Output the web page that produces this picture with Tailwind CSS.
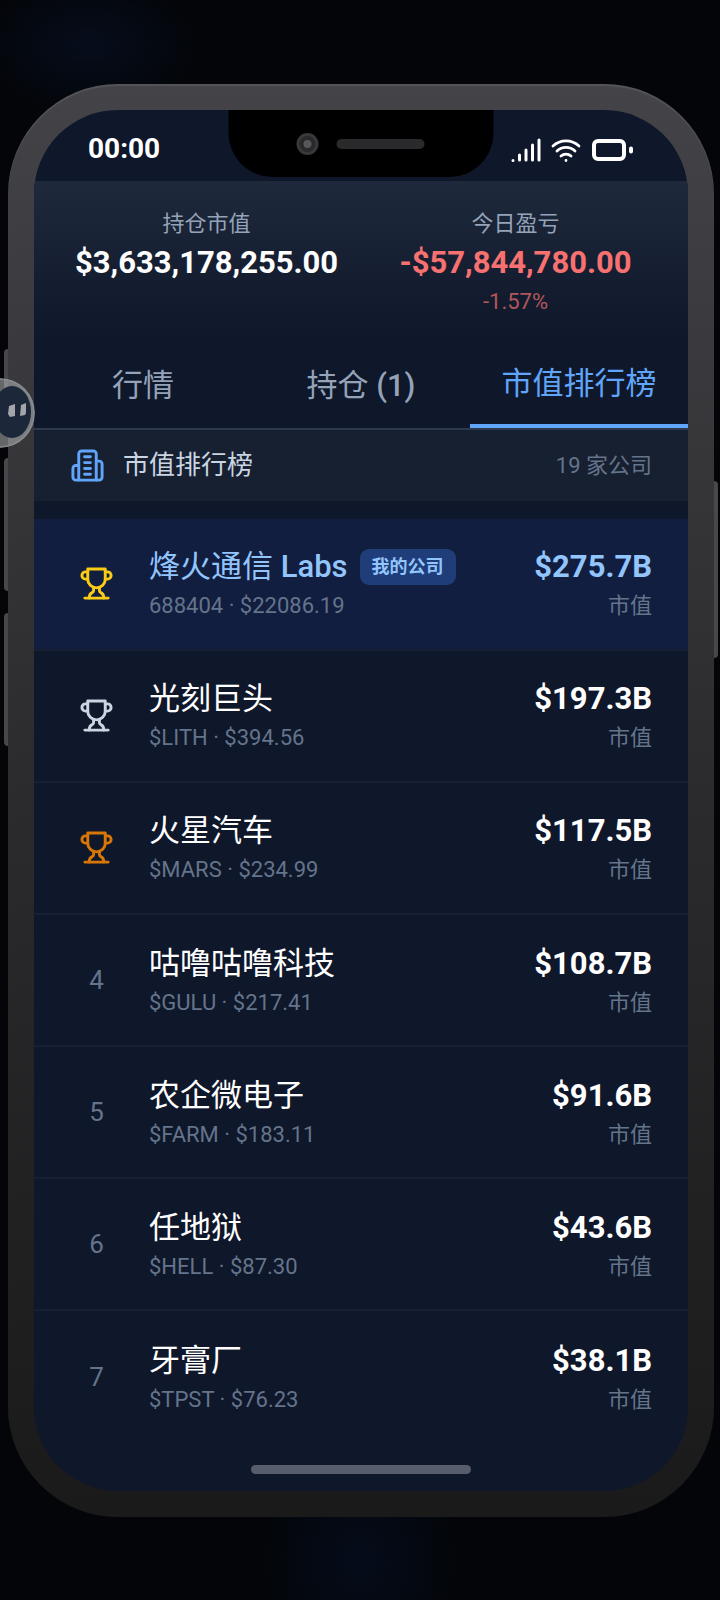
<!DOCTYPE html>
<html lang="zh-CN">
<head>
<meta charset="utf-8">
<meta name="viewport" content="width=device-width, initial-scale=1">
<title>市值排行榜</title>
<script src="https://cdn.jsdelivr.net/npm/@tailwindcss/browser@4"></script>
</head>
<body class="relative min-h-screen overflow-x-hidden bg-[#030509] bg-[radial-gradient(ellipse_110px_70px_at_90px_45px,#060d1b_0%,transparent_100%),radial-gradient(ellipse_100px_120px_at_50%_1560px,#050c1a_0%,transparent_100%)] bg-no-repeat pt-[84px] pr-[6px] pb-[83px] pl-2 font-[Roboto,'Noto_Sans_CJK_SC',sans-serif]">

<svg class="hidden">
  <symbol id="trophy" viewBox="0 0 24 24" fill="none" stroke="currentColor" stroke-width="2" stroke-linecap="round" stroke-linejoin="round">
    <path d="M6 9H4.500a2.500 2.500 0 0 1 0-5H6"/><path d="M18 9h1.500a2.500 2.500 0 0 0 0-5H18"/><path d="M4 22h16"/>
    <path d="M10 14.660V17c0 .55-.47.98-.97 1.210C7.850 18.750 7 20.240 7 22"/>
    <path d="M14 14.660V17c0 .55.47.98.97 1.210C16.150 18.750 17 20.240 17 22"/>
    <path d="M18 2H6v7a6 6 0 0 0 12 0V2Z"/>
  </symbol>
</svg>

<div class="relative">
  <!-- side buttons -->
  <i class="absolute top-[265px] -left-1 h-[66px] w-2 rounded-l bg-[#48484c]"></i>
  <i class="absolute top-[374px] -left-1 h-[133px] w-2 rounded-l bg-[#48484c]"></i>
  <i class="absolute top-[529px] -left-1 h-[133px] w-2 rounded-l bg-[#48484c]"></i>
  <i class="absolute top-[397px] -right-1 h-[177px] w-[6px] rounded-r bg-[#48484c]"></i>

  <div class="relative rounded-[110px] bg-linear-to-b from-[#434348] via-[#2b2b2d] via-50% to-[#1a1a1b] p-[26px] shadow-[inset_0_2px_1px_#ffffff18]">
    <main class="relative overflow-hidden rounded-[84px] bg-[#0f172a] pb-12 text-white">
      <!-- notch -->
      <div class="absolute top-0 left-1/2 flex h-[67px] w-[265px] -translate-x-1/2 items-center justify-center gap-[18px] rounded-b-[44px] bg-black pr-[2px]">
        <i class="flex size-[22px] items-center justify-center rounded-full border-[3px] border-[#39393b] bg-[#29292b]"><b class="size-2 rounded-full bg-[#58585c]"></b></i>
        <i class="h-[10px] w-[88px] rounded-full bg-[#2a2a2c]"></i>
      </div>

      <header class="flex h-[71px] items-center justify-between pt-[7px] pr-[55px] pl-[54px]">
        <time class="text-[28px] leading-9 font-bold">00:00</time>
        <div class="flex items-center gap-[9px] pt-px">
          <svg class="h-6 w-[31px]" viewBox="0 0 31 24" stroke="#fff" stroke-width="3" stroke-linecap="round"><path d="M2 22.500h.01M8.500 22v-5M15 22V12M21.500 22V7M28 22V2"/></svg>
          <svg class="h-6 w-[30px]" viewBox="0 0 30 24" fill="none" stroke="#fff" stroke-width="2.800" stroke-linecap="round"><path d="M2 8a19 19 0 0 1 26 0M6 13a13 13 0 0 1 18 0M10 18a7.500 7.500 0 0 1 10 0M15 22.500h.01"/></svg>
          <svg class="h-6 w-[43px]" viewBox="0 0 43 24" fill="none" stroke="#fff" stroke-width="4" stroke-linecap="round"><rect x="4" y="3" width="30" height="18" rx="4"/><path d="M41 10.500v3"/></svg>
        </div>
      </header>

      <section class="grid grid-cols-2 gap-4 bg-linear-to-b from-[#1e293b] to-[#0f172a] px-[26px] pt-[26px] pb-[25px] text-center">
        <div>
          <p class="text-[22px] leading-[33px] text-[#94a3b8]">持仓市值</p>
          <p class="pt-px text-[31px] leading-[44px] font-bold">$3,633,178,255.00</p>
        </div>
        <div>
          <p class="text-[22px] leading-[33px] text-[#94a3b8]">今日盈亏</p>
          <p class="pt-px text-[31px] leading-[44px] font-bold text-[#f87171]">-$57,844,780.00</p>
          <p class="text-[22px] leading-[33px] text-[#f87171]/70">-1.57%</p>
        </div>
      </section>

      <nav class="grid h-[87px] grid-cols-3 border-b-2 border-[#2c3a4d] text-[31px] leading-[44px] text-[#94a3b8]">
        <button type="button">行情</button>
        <button type="button">持仓 <span class="font-medium">(1)</span></button>
        <button type="button" class="border-b-4 border-[#60a5fa] text-[#60a5fa]">市值排行榜</button>
      </nav>

      <div class="flex h-[71px] items-center justify-between bg-[#172031] px-9 pb-px">
        <div class="flex items-center gap-[18px]">
          <svg class="size-[35px] text-[#60a5fa]" viewBox="0 0 24 24" fill="none" stroke="currentColor" stroke-width="2" stroke-linecap="round" stroke-linejoin="round"><path d="M6 22V4a2 2 0 0 1 2-2h8a2 2 0 0 1 2 2v18Z"/><path d="M6 12H4a2 2 0 0 0-2 2v6a2 2 0 0 0 2 2h2"/><path d="M18 9h2a2 2 0 0 1 2 2v9a2 2 0 0 1-2 2h-2"/><path d="M10 6h4M10 10h4M10 14h4M10 18h4"/></svg>
          <h1 class="text-[26px] leading-9 text-[#cbd5e1]">市值排行榜</h1>
        </div>
        <span class="text-[22px] leading-[33px] text-[#64748b]">19 家公司</span>
      </div>

      <ol class="pt-[18px]">
        <li class="flex h-[132px] items-center border-b-2 border-[#172033] bg-[#121e3f] px-9 pb-px">
          <span class="flex w-[53px] justify-center text-[#facc15]"><svg class="size-[35px]"><use href="#trophy"/></svg></span>
          <div class="ml-[26px] flex-1"><div class="flex items-center gap-3"><h2 class="text-[31px] leading-[44px] text-[#93c5fd]">烽火通信 <span class="font-medium">Labs</span></h2><span class="rounded-[9px] bg-[#1f3d78] px-3 py-[3px] text-[18px] leading-[30px] font-bold text-[#93c5fd]">我的公司</span></div><p class="text-[22px] leading-[33px] text-[#64748b]">688404 · $22086.19</p></div>
          <div class="text-right"><p class="text-[31px] leading-[44px] font-bold text-[#93c5fd]">$275.7B</p><p class="text-[22px] leading-[33px] text-[#64748b]">市值</p></div>
        </li>
        <li class="flex h-[132px] items-center border-b-2 border-[#172033] px-9 pb-px">
          <span class="flex w-[53px] justify-center text-[#cbd5e1]"><svg class="size-[35px]"><use href="#trophy"/></svg></span>
          <div class="ml-[26px] flex-1"><h2 class="text-[31px] leading-[44px]">光刻巨头</h2><p class="text-[22px] leading-[33px] text-[#64748b]">$LITH · $394.56</p></div>
          <div class="text-right"><p class="text-[31px] leading-[44px] font-bold">$197.3B</p><p class="text-[22px] leading-[33px] text-[#64748b]">市值</p></div>
        </li>
        <li class="flex h-[132px] items-center border-b-2 border-[#172033] px-9 pb-px">
          <span class="flex w-[53px] justify-center text-[#d97706]"><svg class="size-[35px]"><use href="#trophy"/></svg></span>
          <div class="ml-[26px] flex-1"><h2 class="text-[31px] leading-[44px]">火星汽车</h2><p class="text-[22px] leading-[33px] text-[#64748b]">$MARS · $234.99</p></div>
          <div class="text-right"><p class="text-[31px] leading-[44px] font-bold">$117.5B</p><p class="text-[22px] leading-[33px] text-[#64748b]">市值</p></div>
        </li>
        <li class="flex h-[132px] items-center border-b-2 border-[#172033] px-9">
          <span class="w-[53px] text-center text-[26px] leading-9 text-[#64748b]">4</span>
          <div class="ml-[26px] flex-1"><h2 class="text-[31px] leading-[44px]">咕噜咕噜科技</h2><p class="text-[22px] leading-[33px] text-[#64748b]">$GULU · $217.41</p></div>
          <div class="text-right"><p class="text-[31px] leading-[44px] font-bold">$108.7B</p><p class="text-[22px] leading-[33px] text-[#64748b]">市值</p></div>
        </li>
        <li class="flex h-[132px] items-center border-b-2 border-[#172033] px-9">
          <span class="w-[53px] text-center text-[26px] leading-9 text-[#64748b]">5</span>
          <div class="ml-[26px] flex-1"><h2 class="text-[31px] leading-[44px]">农企微电子</h2><p class="text-[22px] leading-[33px] text-[#64748b]">$FARM · $183.11</p></div>
          <div class="text-right"><p class="text-[31px] leading-[44px] font-bold">$91.6B</p><p class="text-[22px] leading-[33px] text-[#64748b]">市值</p></div>
        </li>
        <li class="flex h-[132px] items-center border-b-2 border-[#172033] px-9">
          <span class="w-[53px] text-center text-[26px] leading-9 text-[#64748b]">6</span>
          <div class="ml-[26px] flex-1"><h2 class="text-[31px] leading-[44px]">任地狱</h2><p class="text-[22px] leading-[33px] text-[#64748b]">$HELL · $87.30</p></div>
          <div class="text-right"><p class="text-[31px] leading-[44px] font-bold">$43.6B</p><p class="text-[22px] leading-[33px] text-[#64748b]">市值</p></div>
        </li>
        <li class="flex h-[132px] items-center px-9">
          <span class="w-[53px] text-center text-[26px] leading-9 text-[#64748b]">7</span>
          <div class="ml-[26px] flex-1"><h2 class="text-[31px] leading-[44px]">牙膏厂</h2><p class="text-[22px] leading-[33px] text-[#64748b]">$TPST · $76.23</p></div>
          <div class="text-right"><p class="text-[31px] leading-[44px] font-bold">$38.1B</p><p class="text-[22px] leading-[33px] text-[#64748b]">市值</p></div>
        </li>
      </ol>
      <div class="absolute bottom-[17px] left-1/2 h-[9px] w-[220px] -translate-x-1/2 rounded-full bg-[#575d6c]"></div>
    </main>
  </div>
</div>

<!-- floating assistant handle -->
<button type="button" aria-label="助手" class="absolute top-[378px] -left-[35px] size-[70px] overflow-hidden rounded-full">
  <svg class="size-full" viewBox="0 0 70 70">
    <circle cx="35" cy="35" r="35" fill="#b4b7b6" fill-opacity=".55"/>
    <circle cx="35" cy="35" r="34" fill="none" stroke="#8c9298" stroke-width="2" stroke-opacity=".6"/>
    <ellipse cx="47" cy="34" rx="19" ry="26" fill="#1c283a"/>
    <path d="M44 28l6-2v12l-5 1-2-3zM56 27l5-2v10l-1 2-5 1z" fill="#a3a5a8"/>
  </svg>
</button>
</body>
</html>
